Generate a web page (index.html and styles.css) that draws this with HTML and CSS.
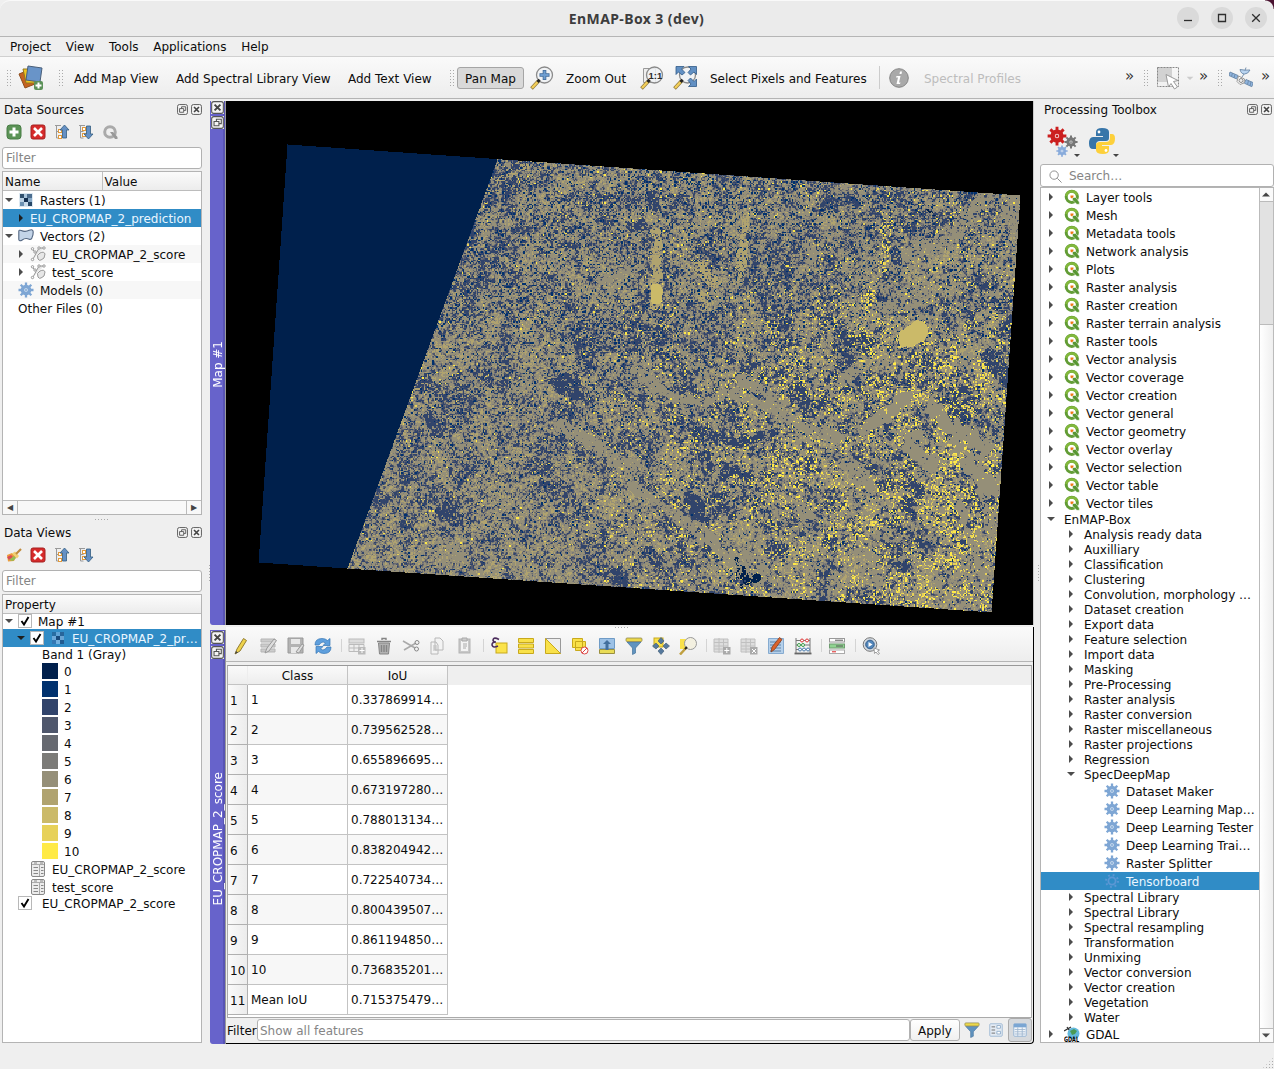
FILE: index.html
```html
<!DOCTYPE html>
<html lang="en">
<head>
<meta charset="utf-8">
<title>EnMAP-Box 3 (dev)</title>
<link rel="stylesheet" href="styles.css">
</head>
<body>
<svg class="defs" aria-hidden="true">
  <symbol id="right" viewBox="0 0 12 12"><path d="M4 2v8l4-4z" fill="#4c4c4c"/></symbol>
  <symbol id="down" viewBox="0 0 12 12"><path d="M2 4h8L6 8z" fill="#4c4c4c"/></symbol>
  <symbol id="float" viewBox="0 0 12 12"><rect x=".6" y=".6" width="10.8" height="10.8" rx="2" fill="#f4f4f4" stroke="#555"/><path d="M5 5V3h4.500v4H7.500M2.800 5h4.500v4H2.800z" fill="none" stroke="#555"/></symbol>
  <symbol id="close" viewBox="0 0 12 12"><rect x=".6" y=".6" width="10.8" height="10.8" rx="2" fill="#f4f4f4" stroke="#555"/><path d="M3.300 3.300l5.400 5.400M8.700 3.300L3.300 8.700" stroke="#444" stroke-width="1.800"/></symbol>
  <symbol id="plus" viewBox="0 0 16 16"><rect x="1" y="1" width="14" height="14" rx="3" fill="#5b9356" stroke="#487c45"/><path d="M8 3.500v9M3.500 8h9" stroke="#fff" stroke-width="3"/></symbol>
  <symbol id="remove" viewBox="0 0 16 16"><rect x="1" y="1" width="14" height="14" rx="2" fill="#d62b2b" stroke="#a52020"/><path d="M4 4l8 8M12 4l-8 8" stroke="#fff" stroke-width="2.600"/></symbol>
  <symbol id="collapse" viewBox="0 0 16 16"><path d="M1 1.500h6M2.500 2v12h3M2.500 7.500h3" fill="none" stroke="#999"/><rect x="4.500" y="5.500" width="3" height="3" fill="#fff" stroke="#e29a3c"/><rect x="4.500" y="11.500" width="3" height="3" fill="#fff" stroke="#e29a3c"/><path d="M10.500 1L15 6h-2.500v8h-4V6H6z" fill="#6590c4" stroke="#335d80" stroke-width=".8"/></symbol>
  <symbol id="expand" viewBox="0 0 16 16"><path d="M1 1.500h6M2.500 2v12h3M2.500 7.500h3" fill="none" stroke="#999"/><rect x="4.500" y="3.500" width="3" height="3" fill="#fff" stroke="#e29a3c"/><rect x="4.500" y="9.500" width="3" height="3" fill="#fff" stroke="#e29a3c"/><path d="M10.500 15L15 10h-2.500V2h-4v8H6z" fill="#6590c4" stroke="#335d80" stroke-width=".8"/></symbol>
  <symbol id="qgray" viewBox="0 0 16 16"><circle cx="8" cy="8" r="5.300" fill="none" stroke="#aaa" stroke-width="3"/><path d="M8 8l3 0 4.500 5v2h-2.500z" fill="#999"/></symbol>
  <symbol id="qgis" viewBox="0 0 16 16"><circle cx="7.800" cy="7.800" r="5.600" fill="none" stroke="#629c35" stroke-width="3"/><path d="M2.300 7A5.600 5.600 0 0 1 13 6" fill="none" stroke="#83b83d" stroke-width="2.600"/><path d="M8.500 8.500h3.300l3.500 4.500v2.300h-2.500L8.500 11z" fill="#589632" stroke="#fff" stroke-width=".5"/><path d="M6.500 6.500h3v1l-1.500 2-1.500-1z" fill="#ee7913"/></symbol>
  <symbol id="raster" viewBox="0 0 16 16"><path d="M1 1h14v14H1z" fill="#dce8f2"/><path d="M2 2h4v4H2z" fill="#31516f"/><path d="M6 2h3v4H6z" fill="#a9c5dc"/><path d="M9 2h5v4H9z" fill="#4b6d8f"/><path d="M2 6h4v4H2z" fill="#b9d0e4"/><path d="M6 6h4v4H6z" fill="#142f50"/><path d="M10 6h4v4h-4z" fill="#86a8c6"/><path d="M2 10h4v4H2z" fill="#6c91b2"/><path d="M6 10h4v4H6z" fill="#c6daea"/><path d="M10 10h4v4h-4z" fill="#274767"/></symbol>
  <symbol id="rasterdim" viewBox="0 0 16 16"><path d="M2 2h4v4H2z" fill="#286da2"/><path d="M6 2h4v4H6z" fill="#5fa3d6"/><path d="M10 2h4v4h-4z" fill="#28659a"/><path d="M2 6h4v4H2z" fill="#6daadb"/><path d="M6 6h4v4H6z" fill="#184a7c"/><path d="M10 6h4v4h-4z" fill="#6aa4d3"/><path d="M2 10h4v4H2z" fill="#3478b3"/><path d="M6 10h4v4H6z" fill="#72b0df"/><path d="M10 10h4v4h-4z" fill="#215b90"/></symbol>
  <symbol id="vector" viewBox="0 0 16 16"><path d="M.8 11.500V3.500q0-1.800 2.400-1 4 1.800 8-.2 4-1.500 4 1.700 0 3-1 5-.5 3-3 2.200-4-1.700-7 .8-3 1.800-3.400-.5z" fill="#c3d4e8" stroke="#516580" stroke-width="1.100"/></symbol>
  <symbol id="geom" viewBox="0 0 16 16"><path d="M3 13L9 2h5M2 3l3 3M8 13q-2-4 2-6 4-2 5 1 0 5-4 6-2 1-3-1z" fill="#e7e7e7" stroke="#999"/><g fill="#fff" stroke="#999"><circle cx="2.500" cy="2.800" r="1.200"/><circle cx="5" cy="6" r="1.200"/><circle cx="2.500" cy="13.500" r="1.200"/><circle cx="9" cy="2" r="1.200"/><circle cx="14" cy="2" r="1.200"/></g></symbol>
  <symbol id="gear" viewBox="0 0 16 16"><path d="M8 .5v15M.5 8h15M2.700 2.700l10.600 10.600M13.300 2.700L2.700 13.300" stroke="currentColor" stroke-width="2.300"/><circle cx="8" cy="8" r="5.300" fill="currentColor"/><circle cx="8" cy="8" r="1.800" fill="#fff" fill-opacity=".75"/><circle cx="8" cy="8" r="1" fill="currentColor"/></symbol>
  <symbol id="form" viewBox="0 0 16 16"><rect x="1.500" y=".5" width="13" height="15" rx="1.500" fill="#ececec" stroke="#888"/><path d="M2 3.500h12M9.500 4v11" stroke="#aaa"/><path d="M3.500 6.500h4.500M3.500 9.500h4.500M3.500 12.500h4.500M11 6.500h2.500M11 9.500h2.500M11 12.500h2.500M4 2h3M10 2h3" stroke="#888"/></symbol>
  <symbol id="broom" viewBox="0 0 16 16"><path d="M1 8l5-2 4 4-2 4-6 .5z" fill="#ed9b3c"/><path d="M1 10l4-2 2 2-4 3z" fill="#d84b54"/><path d="M3 13l5-4 2 2-3 3z" fill="#92bd54"/><path d="M6 6.500l5 5 2-2.500-4-4.500z" fill="#f1cf72"/><path d="M10 7l5-5" stroke="#c08a3c" stroke-width="2.200"/></symbol>
  <symbol id="tick" viewBox="0 0 14 14"><rect x=".5" y=".5" width="13" height="13" fill="#fff" stroke="#b8b8b8"/><path d="M3.500 7l2.500 3.500L10.500 3" fill="none" stroke="#000" stroke-width="1.900"/></symbol>
  <symbol id="lens" viewBox="0 0 24 24"><circle cx="14.500" cy="9" r="8" fill="#f0f2f4" fill-opacity=".85" stroke="#8a8a8a" stroke-width="1.300"/><path d="M8.500 15l-7 7.500" stroke="#8b753a" stroke-width="3.600"/><path d="M8 15.500l-6 6.500" stroke="#f3cf5a" stroke-width="2.400"/><path d="M9.700 13.700l-2.200 2.300" stroke="#222" stroke-width="2.800"/></symbol>
  <symbol id="funnel" viewBox="0 0 18 18"><path d="M2 5h14l-5.500 6v5l-3 1.500V11z" fill="#6093bf" stroke="#44739c" stroke-width=".7"/><rect x="1" y="1" width="16" height="3.500" rx="1" fill="#ecd84b" stroke="#8f8852" stroke-width=".8"/></symbol>
</svg>

<header class="titlebar">
  <span class="corner"></span>
  <h1>EnMAP-Box 3 (dev)</h1>
  <div class="winbtns">
    <svg viewBox="0 0 22 22"><circle cx="11" cy="11" r="11"/><path d="M7 13.500h8"/></svg>
    <svg viewBox="0 0 22 22"><circle cx="11" cy="11" r="11"/><path d="M7.500 7.500h7v7h-7z"/></svg>
    <svg viewBox="0 0 22 22"><circle cx="11" cy="11" r="11"/><path d="M7.200 7.200l7.600 7.600M14.800 7.200l-7.600 7.600"/></svg>
  </div>
</header>
<nav class="menubar"><span>Project</span><span>View</span><span>Tools</span><span>Applications</span><span>Help</span></nav>

<div class="toolbar">
  <i class="grip"></i>
  <svg class="i26" viewBox="0 0 26 26"><path d="M1 9l10-4 6 14-10 4z" fill="#c5621f" stroke="#8d4d1c"/><path d="M5 4h13v14H8z" fill="#f0c51e" stroke="#8f7623"/><path d="M10 1l14 2-2 14-14-2z" fill="#6994c8" stroke="#4a5f79"/><rect x="16" y="16" width="9" height="9" rx="2" fill="#5b9158"/><path d="M20.500 17.500v6M17.500 20.500h6" stroke="#fff" stroke-width="2"/></svg>
  <i class="grip"></i>
  <span>Add Map View</span><span>Add Spectral Library View</span><span>Add Text View</span>
  <i class="grip"></i>
  <span class="pressed">Pan Map</span>
  <svg class="i24" viewBox="0 0 24 24"><use href="#lens"/><path d="M14.500 4v10M9.500 9h10" stroke="#426c9b" stroke-width="3.600"/><path d="M14.500 4.800v8.400M10.300 9h8.400" stroke="#6e9dd0" stroke-width="2"/></svg>
  <span>Zoom Out</span>
  <svg class="i24" viewBox="0 0 24 24"><path d="M3.500 2.500h12v14h-12z" fill="#eee" stroke="#999"/><use href="#lens"/><text class="one" x="8.500" y="12.500">1:1</text></svg>
  <svg class="i24" viewBox="0 0 24 24"><use href="#lens"/><g fill="#6290c3" stroke="#315b88" stroke-width=".8"><path d="M3 .500h8L8.500 3 12 6.500 9 9 5.500 6 3 8.500z"/><path d="M23.500.500h-8L18 3l-3 3.500L17.500 9 21 6l2.500 2.500z"/><path d="M23.500 20.500h-8L18 18l-3-3.500 2.500-2.500 3.500 3.500 2.500-2.500z"/></g></svg>
  <span>Select Pixels and Features</span>
  <i class="sep"></i>
  <svg class="i20" viewBox="0 0 20 20"><circle cx="10" cy="10" r="9.300" fill="#a9a9a9" stroke="#858585"/><path d="M11 3.500h2l-.5 2.500h-2zM7.500 8h4l-1.500 6.500h1.500l-.5 1.500H7.500l1.500-6.500H7z" fill="#fff"/></svg>
  <span class="off">Spectral Profiles</span>
  <b class="more">»</b>
  <i class="grip"></i>
  <svg class="i24" viewBox="0 0 24 24"><path d="M1 1h15v15H1z" fill="#d2d2d2"/><path d="M1.500 1.500h21v19h-21z" fill="none" stroke="#888" stroke-dasharray="2 1"/><path d="M10 8.500l12 6-4.500 1 4 5.500-3 2-3.500-5.500-2.500 3.500z" fill="#fff" stroke="#999"/></svg>
  <svg class="i10" viewBox="0 0 12 12"><path d="M1 4h10L6 9z" fill="#ccc"/></svg>
  <b class="more">»</b>
  <i class="grip"></i>
  <svg class="i24" viewBox="0 0 24 24"><g stroke="#6a88a8" stroke-width=".9"><path d="M1 6l8 3.500-1.300 3.500L0 9.500z" fill="#8fb4de"/><path d="M17 13.500l7.300 3.200-1.500 4-7.500-3.500z" fill="#8fb4de"/><path d="M3.500 7l-1 3.500M6 8.300L5 12M19.500 14.500l-1 4M22 15.800l-1 4" fill="none"/><path d="M11 3.500q5 1 10 .5-2 4-5.500 4t-4.500-4.500zM16 4.500l1-3M15 8l-2 3" fill="#b9d4f0"/></g><path d="M9.500 10l6 3-.5 4-4 1.500-3-3z" fill="#fff" stroke="#999"/><circle cx="12" cy="14.500" r="2" fill="#eee" stroke="#888"/></svg>
  <b class="more">»</b>
</div>

<main>
  <aside class="dock left">
    <div class="dtitle"><span>Data Sources</span><svg><use href="#float"/></svg><svg><use href="#close"/></svg></div>
    <div class="dtools"><svg><use href="#plus"/></svg><svg><use href="#remove"/></svg><svg><use href="#collapse"/></svg><svg><use href="#expand"/></svg><svg><use href="#qgray"/></svg></div>
    <div class="field">Filter</div>
    <div class="tree sources">
      <div class="thead two"><span>Name</span><span>Value</span></div>
      <div class="rows">
        <div class="r"><svg class="a"><use href="#down"/></svg><svg><use href="#raster"/></svg>Rasters (1)</div>
        <div class="r l1 sel"><svg class="a"><use href="#right"/></svg>EU_CROPMAP_2_prediction</div>
        <div class="r"><svg class="a"><use href="#down"/></svg><svg><use href="#vector"/></svg>Vectors (2)</div>
        <div class="r l1 alt"><svg class="a"><use href="#right"/></svg><svg><use href="#geom"/></svg>EU_CROPMAP_2_score</div>
        <div class="r l1"><svg class="a"><use href="#right"/></svg><svg><use href="#geom"/></svg>test_score</div>
        <div class="r alt"><i class="a"></i><svg class="blue"><use href="#gear"/></svg>Models (0)</div>
        <div class="r"><i class="a"></i>Other Files (0)</div>
      </div>
      <div class="hscroll"><b>◀</b><i></i><b>▶</b></div>
    </div>
    <div class="hsplit"></div>
    <div class="dtitle"><span>Data Views</span><svg><use href="#float"/></svg><svg><use href="#close"/></svg></div>
    <div class="dtools"><svg><use href="#broom"/></svg><svg><use href="#remove"/></svg><svg><use href="#collapse"/></svg><svg><use href="#expand"/></svg></div>
    <div class="field">Filter</div>
    <div class="tree views">
      <div class="thead"><span>Property</span></div>
      <div class="rows">
        <div class="r s"><svg class="a"><use href="#down"/></svg><svg class="c"><use href="#tick"/></svg>Map #1</div>
        <div class="r l1 sel"><svg class="a"><use href="#down"/></svg><svg class="c"><use href="#tick"/></svg><svg><use href="#rasterdim"/></svg>EU_CROPMAP_2_pr…</div>
        <div class="r s l2"><i class="a"></i>Band 1 (Gray)</div>
        <div class="r l2"><i class="a"></i><i class="sw k0"></i>0</div>
        <div class="r l2"><i class="a"></i><i class="sw k1"></i>1</div>
        <div class="r l2"><i class="a"></i><i class="sw k2"></i>2</div>
        <div class="r l2"><i class="a"></i><i class="sw k3"></i>3</div>
        <div class="r l2"><i class="a"></i><i class="sw k4"></i>4</div>
        <div class="r l2"><i class="a"></i><i class="sw k5"></i>5</div>
        <div class="r l2"><i class="a"></i><i class="sw k6"></i>6</div>
        <div class="r l2"><i class="a"></i><i class="sw k7"></i>7</div>
        <div class="r l2"><i class="a"></i><i class="sw k8"></i>8</div>
        <div class="r l2"><i class="a"></i><i class="sw k9"></i>9</div>
        <div class="r l2"><i class="a"></i><i class="sw k10"></i>10</div>
        <div class="r l1"><i class="a"></i><svg><use href="#form"/></svg>EU_CROPMAP_2_score</div>
        <div class="r l1"><i class="a"></i><svg><use href="#form"/></svg>test_score</div>
        <div class="r s wide"><i class="a"></i><svg class="c"><use href="#tick"/></svg>EU_CROPMAP_2_score</div>
      </div>
    </div>
  </aside>
  <div class="vsplit"></div>

  <section class="center">
    <div class="mapdock">
      <div class="strip"><svg><use href="#close"/></svg><svg><use href="#float"/></svg><span>Map #1</span></div>
      <canvas id="map" width="807" height="524"></canvas>
    </div>
    <div class="hsplit mid"></div>
    <div class="tabdock">
      <div class="strip"><svg><use href="#close"/></svg><svg><use href="#float"/></svg><span>EU_CROPMAP_2_score</span></div>
      <div class="attr">
        <div class="atools">
          <svg viewBox="0 0 18 18"><path d="M2 17l2-5L10.500 1.500l3 2-6.500 10.500z" fill="#eed24b" stroke="#937d31"/><path d="M2 17l1-3 2 1.500z" fill="#444"/></svg>
          <svg viewBox="0 0 18 18"><path d="M1 2h14v3H1zM1 7h14v3H1zM1 12h14v3H1z" fill="#ccc" stroke="#b5b5b5"/><path d="M5 16l2-5 7-9 2.500 1.500-7.500 10.500z" fill="#ddd" stroke="#999"/></svg>
          <svg viewBox="0 0 18 18"><path d="M1 1h15v15H1z" fill="#b3b3b3" stroke="#999"/><path d="M4 2h9v5H4zM4 10h9v6H4z" fill="#e8e8e8"/><path d="M9 15l6-8 2 1-5 8z" fill="#ddd" stroke="#999"/></svg>
          <svg viewBox="0 0 18 18"><path d="M1 8q0-6.500 7-6.500 3.500 0 5.500 2l2.500-2v7H9l2.500-2.500Q8 3.500 5 8z" fill="#5e9fdd" stroke="#3476b5" stroke-width=".7"/><path d="M17 10q0 6.500-7 6.500-3.500 0-5.500-2l-2.500 2v-7h7l-2.500 2.500q3.500 2.500 6.500-2z" fill="#5e9fdd" stroke="#3476b5" stroke-width=".7"/></svg>
          <i></i>
          <svg viewBox="0 0 18 18"><rect x="1" y="2" width="15" height="4" fill="#ddd" stroke="#bbb"/><path d="M1 7.500h15v7H1zM6 7.500v7M11 7.500v7M1 11h15" fill="#eee" stroke="#bbb"/><path d="M10 10h7.500v7.500H10z" fill="#bbb"/><path d="M14 11v5M11.500 13.500h5" stroke="#fff"/></svg>
          <svg viewBox="0 0 18 18"><path d="M3.500 6h11l-1 11h-9z" fill="#b2b2b2" stroke="#858585"/><path d="M2 4.500h14M7 3V1.500h4V3M6.500 8v7M9 8v7M11.500 8v7" fill="none" stroke="#858585" stroke-width="1.400"/></svg>
          <svg viewBox="0 0 18 18"><path d="M1 4l12 7M2 13l12-7" stroke="#aaa" stroke-width="1.600"/><circle cx="15" cy="5.500" r="2" fill="none" stroke="#888"/><circle cx="14.500" cy="12" r="2" fill="none" stroke="#888"/></svg>
          <svg viewBox="0 0 18 18"><path d="M6 1h5l3 3v9H6zM2 5h5l2 3v9H2z" fill="#f3f3f3" stroke="#b8b8b8"/><path d="M4 9h4M4 11h4M4 13h4" stroke="#bbb"/></svg>
          <svg viewBox="0 0 18 18"><rect x="3" y="2" width="11" height="14" fill="#c8c8c8" stroke="#b3b3b3"/><path d="M5 4h7v10H5z" fill="#f3f3f3"/><path d="M6 1h5v3H6zM7 7h4M7 9h4M7 11h3" fill="#ccc" stroke="#aaa"/></svg>
          <i></i>
          <svg viewBox="0 0 18 18"><rect x="6" y="6" width="11" height="10" fill="#fbe34b" stroke="#c8a91c"/><path d="M9 2.500Q3.500-.500 3 3q0 2 3 2-4 0-4 3 1 3.500 6 1" fill="none" stroke="#4d2e5d" stroke-width="1.600"/></svg>
          <svg viewBox="0 0 18 18"><path d="M1.500 1.500h15v4h-15zM1.500 7h15v4h-15zM1.500 12.500h15v4h-15z" fill="#f9e149" stroke="#c8a91c"/></svg>
          <svg viewBox="0 0 18 18"><path d="M1.500 1.500h15v15z" fill="#eee" stroke="#999"/><path d="M1.500 1.500v15h15z" fill="#f9e149" stroke="#c8a91c"/></svg>
          <svg viewBox="0 0 18 18"><path d="M1.500 1.500h10v9h-10zM4.500 4.500h10v9h-10z" fill="#f9e149" stroke="#c8a91c"/><circle cx="13.500" cy="13.500" r="3.500" fill="#fff" stroke="#d44"/><path d="M11 16l5-5" stroke="#d44"/></svg>
          <svg viewBox="0 0 18 18"><path d="M1.500 1.500h15v10h-15z" fill="#9cc1e6" stroke="#6f9bc6"/><path d="M1.500 12.500h15v4h-15z" fill="#e9dc57" stroke="#9b903f"/><path d="M9 3l4 4h-2.500v6h-3V7H5z" fill="#426f9d"/></svg>
          <svg viewBox="0 0 18 18"><use href="#funnel"/></svg>
          <svg viewBox="0 0 18 18"><rect x="2" y="1" width="9" height="9" fill="#f9e149" stroke="#c8a91c"/><g fill="#55799d" stroke="#3c5771" stroke-width=".6"><path d="M9 .5l3 3.500L9 7 6 4zM9 17.500l3-3.500L9 11l-3 3zM.5 9l3.500-3L7 9l-3 3zM17.500 9l-3.500-3L11 9l3 3z"/></g></svg>
          <svg viewBox="0 0 18 18"><path d="M1 2h9v10H1z" fill="#f9e149"/><circle cx="11.500" cy="6.500" r="6" fill="#f3f0e0" stroke="#999"/><path d="M7 11l-6 6.500" stroke="#c0a040" stroke-width="2.500"/><path d="M8 10l-2 2" stroke="#222" stroke-width="2"/></svg>
          <i></i>
          <svg viewBox="0 0 18 18"><path d="M1 2h14v13H1zM6 1v15M10.500 2v13M1 5.500h14M1 9h14M1 12h14" fill="#ddd" stroke="#c0c0c0"/><path d="M10 10h7.500v7.500H10z" fill="#aaa"/><path d="M13.800 11v5M11.300 13.500h5" stroke="#fff"/></svg>
          <svg viewBox="0 0 18 18"><path d="M1 2h14v13H1zM6 1v15M10.500 2v13M1 5.500h14M1 9h14M1 12h14" fill="#ddd" stroke="#c0c0c0"/><path d="M10 10h7.500v7.500H10z" fill="#aaa"/><path d="M12 12l4 4M16 12l-4 4" stroke="#fff"/></svg>
          <svg viewBox="0 0 18 18"><path d="M1.500 1.500h15v15h-15z" fill="#b5d0ea" stroke="#86abd0"/><path d="M3 5h11M3 8h11M3 11h11M3 14h11" stroke="#5c81a8"/><path d="M4 15l1-5 7.500-9.500 2.500 2-7.500 10z" fill="#dc632b" stroke="#843e1e" stroke-width=".8"/></svg>
          <svg viewBox="0 0 18 18"><path d="M2 1v15M16 1v15M2 3.500h14M2 8h14M2 12.500h14" stroke="#777"/><path d="M.5 16.500h17" stroke="#666" stroke-width="1.800"/><g fill="#fff"><g stroke="#d33"><circle cx="8" cy="3.500" r="1.500"/><circle cx="13" cy="3.500" r="1.500"/></g><g stroke="#3a9c48"><circle cx="5" cy="8" r="1.500"/><circle cx="9" cy="8" r="1.500"/></g><g stroke="#477aad"><circle cx="6" cy="12.500" r="1.500"/><circle cx="10" cy="12.500" r="1.500"/><circle cx="14" cy="12.500" r="1.500"/></g></g></svg>
          <i></i>
          <svg viewBox="0 0 18 18"><rect x="1.500" y="1.500" width="15" height="3.500" fill="#fff" stroke="#999"/><rect x="1.500" y="7" width="15" height="4" fill="#8fd390" stroke="#6f9c70"/><rect x="1.500" y="13" width="15" height="3.500" fill="#fff" stroke="#aaa"/><path d="M7 3.200h8M8 9h7" stroke="#555"/><path d="M4 14.800h4" stroke="#d22"/></svg>
          <i></i>
          <svg viewBox="0 0 18 18"><circle cx="8" cy="7.500" r="6.800" fill="#d5dbe2" stroke="#777"/><circle cx="8" cy="7.500" r="4.300" fill="#5286bb" stroke="#345f8c"/><path d="M6.500 5l4 2.500-4 2.500z" fill="#fff"/><path d="M12 11l5.500 2-2 1 2 2.500-1.500 1-2-2.500-1.500 1.500z" fill="#fff" stroke="#888" stroke-width=".8"/></svg>
        </div>
        <div class="tablebox">
          <table>
            <thead><tr><th></th><th>Class</th><th>IoU</th></tr></thead>
            <tbody>
              <tr><th>1</th><td>1</td><td>0.337869914…</td></tr>
              <tr><th>2</th><td>2</td><td>0.739562528…</td></tr>
              <tr><th>3</th><td>3</td><td>0.655896695…</td></tr>
              <tr><th>4</th><td>4</td><td>0.673197280…</td></tr>
              <tr><th>5</th><td>5</td><td>0.788013134…</td></tr>
              <tr><th>6</th><td>6</td><td>0.838204942…</td></tr>
              <tr><th>7</th><td>7</td><td>0.722540734…</td></tr>
              <tr><th>8</th><td>8</td><td>0.800439507…</td></tr>
              <tr><th>9</th><td>9</td><td>0.861194850…</td></tr>
              <tr><th>10</th><td>10</td><td>0.736835201…</td></tr>
              <tr><th>11</th><td>Mean IoU</td><td>0.715375479…</td></tr>
            </tbody>
          </table>
        </div>
        <div class="filterrow">
          <label>Filter</label><div class="finput">Show all features</div><div class="apply">Apply</div>
          <div class="fb"><svg viewBox="0 0 18 18"><use href="#funnel"/></svg></div>
          <div class="fb"><svg viewBox="0 0 18 18"><rect x="2" y="2" width="14" height="14" rx="1" fill="#e4ebf3" stroke="#9bb6d2"/><path d="M4 5.500h4M4 9h4M4 12.500h4" stroke="#666"/><path d="M10 4h4v3h-4zM10 10.500h4v3h-4z" fill="#fff" stroke="#8eacca"/></svg></div>
          <div class="fb on"><svg viewBox="0 0 18 18"><rect x="2" y="2" width="14" height="14" rx="1" fill="#f3f7fb" stroke="#8fb0d2"/><path d="M2 2h14v4H2z" fill="#7ba6d3"/><path d="M6.500 6v10M11.500 6v10M3 8.500h12M3 11h12M3 13.500h12" stroke="#9fb6cf"/></svg></div>
        </div>
      </div>
    </div>
  </section>

  <div class="vsplit right"></div>
  <aside class="dock toolbox">
    <div class="dtitle"><span>Processing Toolbox</span><svg><use href="#float"/></svg><svg><use href="#close"/></svg></div>
    <div class="ptools">
      <svg viewBox="0 0 34 34"><svg x="0" y="0" width="20" height="20" color="#cb1f1f"><use href="#gear"/></svg><svg x="17" y="9" width="14" height="14" color="#777"><use href="#gear"/></svg><svg x="9" y="19" width="12" height="12" color="#88abdb"><use href="#gear"/></svg><path d="M27 28h6l-3 3z" fill="#444"/></svg>
      <svg viewBox="0 0 34 34"><path d="M14 2q-6 0-6 4v4h7v1H5q-4 0-4 6.500Q1 23 5 23h3v-4q0-4 4-4h6q3 0 3-3V6q0-4-7-4z" fill="#3775a9"/><path d="M15 28q6 0 6-4v-4h-7v-1h9q4 0 4-6.500Q27 8 24 8h-2v4q0 4-4 4h-6q-4 0-4 3v5q0 4 7 4z" fill="#fdd03b"/><circle cx="11" cy="6" r="1.400" fill="#fff"/><circle cx="18" cy="24.500" r="1.400" fill="#fff"/><path d="M25 28h6l-3 3z" fill="#444"/></svg>
    </div>
    <div class="field search"><svg viewBox="0 0 14 14"><circle cx="5.500" cy="5.500" r="4.500" fill="none" stroke="#888"/><path d="M9 9l4.500 4.500" stroke="#888"/></svg>Search…</div>
    <div class="tree ptree">
      <div class="rows">
        <div class="r"><svg class="a"><use href="#right"/></svg><svg><use href="#qgis"/></svg>Layer tools</div>
        <div class="r"><svg class="a"><use href="#right"/></svg><svg><use href="#qgis"/></svg>Mesh</div>
        <div class="r"><svg class="a"><use href="#right"/></svg><svg><use href="#qgis"/></svg>Metadata tools</div>
        <div class="r"><svg class="a"><use href="#right"/></svg><svg><use href="#qgis"/></svg>Network analysis</div>
        <div class="r"><svg class="a"><use href="#right"/></svg><svg><use href="#qgis"/></svg>Plots</div>
        <div class="r"><svg class="a"><use href="#right"/></svg><svg><use href="#qgis"/></svg>Raster analysis</div>
        <div class="r"><svg class="a"><use href="#right"/></svg><svg><use href="#qgis"/></svg>Raster creation</div>
        <div class="r"><svg class="a"><use href="#right"/></svg><svg><use href="#qgis"/></svg>Raster terrain analysis</div>
        <div class="r"><svg class="a"><use href="#right"/></svg><svg><use href="#qgis"/></svg>Raster tools</div>
        <div class="r"><svg class="a"><use href="#right"/></svg><svg><use href="#qgis"/></svg>Vector analysis</div>
        <div class="r"><svg class="a"><use href="#right"/></svg><svg><use href="#qgis"/></svg>Vector coverage</div>
        <div class="r"><svg class="a"><use href="#right"/></svg><svg><use href="#qgis"/></svg>Vector creation</div>
        <div class="r"><svg class="a"><use href="#right"/></svg><svg><use href="#qgis"/></svg>Vector general</div>
        <div class="r"><svg class="a"><use href="#right"/></svg><svg><use href="#qgis"/></svg>Vector geometry</div>
        <div class="r"><svg class="a"><use href="#right"/></svg><svg><use href="#qgis"/></svg>Vector overlay</div>
        <div class="r"><svg class="a"><use href="#right"/></svg><svg><use href="#qgis"/></svg>Vector selection</div>
        <div class="r"><svg class="a"><use href="#right"/></svg><svg><use href="#qgis"/></svg>Vector table</div>
        <div class="r"><svg class="a"><use href="#right"/></svg><svg><use href="#qgis"/></svg>Vector tiles</div>
        <div class="r s"><svg class="a"><use href="#down"/></svg>EnMAP-Box</div>
        <div class="r s l1"><svg class="a"><use href="#right"/></svg>Analysis ready data</div>
        <div class="r s l1"><svg class="a"><use href="#right"/></svg>Auxilliary</div>
        <div class="r s l1"><svg class="a"><use href="#right"/></svg>Classification</div>
        <div class="r s l1"><svg class="a"><use href="#right"/></svg>Clustering</div>
        <div class="r s l1"><svg class="a"><use href="#right"/></svg>Convolution, morphology …</div>
        <div class="r s l1"><svg class="a"><use href="#right"/></svg>Dataset creation</div>
        <div class="r s l1"><svg class="a"><use href="#right"/></svg>Export data</div>
        <div class="r s l1"><svg class="a"><use href="#right"/></svg>Feature selection</div>
        <div class="r s l1"><svg class="a"><use href="#right"/></svg>Import data</div>
        <div class="r s l1"><svg class="a"><use href="#right"/></svg>Masking</div>
        <div class="r s l1"><svg class="a"><use href="#right"/></svg>Pre-Processing</div>
        <div class="r s l1"><svg class="a"><use href="#right"/></svg>Raster analysis</div>
        <div class="r s l1"><svg class="a"><use href="#right"/></svg>Raster conversion</div>
        <div class="r s l1"><svg class="a"><use href="#right"/></svg>Raster miscellaneous</div>
        <div class="r s l1"><svg class="a"><use href="#right"/></svg>Raster projections</div>
        <div class="r s l1"><svg class="a"><use href="#right"/></svg>Regression</div>
        <div class="r s l1"><svg class="a"><use href="#down"/></svg>SpecDeepMap</div>
        <div class="r l2"><i class="a"></i><svg class="blue"><use href="#gear"/></svg>Dataset Maker</div>
        <div class="r l2"><i class="a"></i><svg class="blue"><use href="#gear"/></svg>Deep Learning Map…</div>
        <div class="r l2"><i class="a"></i><svg class="blue"><use href="#gear"/></svg>Deep Learning Tester</div>
        <div class="r l2"><i class="a"></i><svg class="blue"><use href="#gear"/></svg>Deep Learning Trai…</div>
        <div class="r l2"><i class="a"></i><svg class="blue"><use href="#gear"/></svg>Raster Splitter</div>
        <div class="r l2 sel"><i class="a"></i><svg viewBox="0 0 16 16"><circle cx="8" cy="8" r="3.600" fill="none" stroke="#5b97d4" stroke-width="1.800"/><circle cx="8" cy="8" r="6" fill="none" stroke="#5b97d4" stroke-width="2" stroke-dasharray="1.800 2.910"/></svg>Tensorboard</div>
        <div class="r s l1"><svg class="a"><use href="#right"/></svg>Spectral Library</div>
        <div class="r s l1"><svg class="a"><use href="#right"/></svg>Spectral Library</div>
        <div class="r s l1"><svg class="a"><use href="#right"/></svg>Spectral resampling</div>
        <div class="r s l1"><svg class="a"><use href="#right"/></svg>Transformation</div>
        <div class="r s l1"><svg class="a"><use href="#right"/></svg>Unmixing</div>
        <div class="r s l1"><svg class="a"><use href="#right"/></svg>Vector conversion</div>
        <div class="r s l1"><svg class="a"><use href="#right"/></svg>Vector creation</div>
        <div class="r s l1"><svg class="a"><use href="#right"/></svg>Vegetation</div>
        <div class="r s l1"><svg class="a"><use href="#right"/></svg>Water</div>
        <div class="r"><svg class="a"><use href="#right"/></svg><svg viewBox="0 0 16 16"><circle cx="9.500" cy="7.500" r="6" fill="#62b8dc"/><path d="M6 5l4-2 3 2-2 3-3 1z" fill="#4a9a55"/><path d="M0 5l7-4M3 1l2 3" stroke="#333" stroke-width="1.300"/><text x="0" y="15.500" font-size="7.500" font-weight="bold" textLength="15" lengthAdjust="spacingAndGlyphs">GDAL</text></svg>GDAL</div>
      </div>
      <div class="vscroll"><svg viewBox="0 0 12 12"><path d="M2 8h8L6 4z" fill="#444"/></svg><i class="groove"></i><i class="handle"></i><svg><use href="#down"/></svg></div>
    </div>
  </aside>
</main>
<footer><i class="sizegrip"></i></footer>
<script src="map.js"></script>
</body>
</html>
```
FILE: styles.css
```css
* { box-sizing: border-box; }
body { margin: 0; width: 1274px; height: 1069px; overflow: hidden; display: flex; flex-direction: column; background: #efefef; color: #0c0c0c; font: 12px/15px "DejaVu Sans", sans-serif; }
svg { display: block; flex: none; }
.defs { position: absolute; width: 0; height: 0; }

.titlebar { position: relative; height: 37px; flex: none; display: grid; place-items: center; background: #ebebeb; border-top: 1px solid #f9f9f9; border-bottom: 1px solid #b5b5b5; border-radius: 10px 0 0 0; }
.titlebar h1 { margin: 0 1px 0 0; font: bold 14px/20px "Noto Sans", sans-serif; color: #3d3d3d; letter-spacing: .4px; }
.corner { position: absolute; right: 0; top: -1px; width: 9px; height: 9px; background: radial-gradient(circle at 0 100%, #ebebeb 8px, #4a1230 9px); }
.winbtns { position: absolute; right: 7px; top: 6px; display: flex; gap: 12px; }
.winbtns svg { width: 22px; height: 22px; fill: #dadada; }
.winbtns path { fill: none; stroke: #2e2e2e; stroke-width: 1.3; }

.menubar { height: 20px; flex: none; display: flex; gap: 14.7px; padding: 3px 10px 0; border-bottom: 1px solid #d0d0d0; }
.toolbar { height: 42px; flex: none; display: grid; grid-template-columns: 13px 39px 16px 102px 172px 101px 8px 73px 36px 74px 33px 37px 169px 10px 35px 202px 17px 13px 30px 14px 17px 12px 33px 12px; align-items: center; padding-left: 6px; background: linear-gradient(#fafafa, #ededed); border-bottom: 1px solid #b4b4b4; white-space: nowrap; }
.toolbar > span { padding-top: 4px; }
.grip { width: 5px; height: 17px; background: radial-gradient(circle, #aaa .7px, transparent 1px) 0 0 / 3px 3px; }
.sep { width: 1px; height: 23px; background: #ccc; }
.i26 { width: 26px; height: 26px; margin-left: -1px; }
.i24 { width: 24px; height: 24px; }
.i20 { width: 20px; height: 20px; }
.i10 { width: 8px; height: 8px; }
.one { font: bold 9.5px "Liberation Sans", sans-serif; fill: #2a2a2a; }
.toolbar > .pressed { padding-top: 2px; width: 67px; height: 22px; line-height: 19px; text-align: center; border: 1px solid #a5a5a5; border-radius: 3px; background: #d9d9d9; }
.off { color: #bdbdbd; }
.more { font: 15px/16px "DejaVu Sans", sans-serif; color: #333; margin: -4px 0 0 -1px; }

main { height: 945px; flex: none; display: flex; }
.dock { display: flex; flex-direction: column; }
.left { width: 202px; padding-left: 2px; }
.vsplit { width: 8px; background: radial-gradient(circle, #aaa .6px, transparent 1px) 0 0 / 3px 3px; clip-path: inset(466px 0 463px 5px); }
.vsplit.right { width: 6px; clip-path: inset(466px 0 463px 3px); }
.dtitle { height: 21px; flex: none; display: flex; align-items: center; gap: 3px; padding-left: 2px; }
.dtitle span { padding-top: 2px; }
.dtitle svg { width: 11px; height: 11px; }
.dtitle svg:first-of-type { margin-left: auto; }
.dtools { height: 27px; flex: none; display: flex; gap: 8px; padding: 4px 4px 0; }
.dtools svg { width: 16px; height: 16px; }
.field { height: 22px; flex: none; display: flex; align-items: center; padding: 0 3px; background: #fff; border: 1px solid #b1b1b1; border-radius: 3px; color: #858585; }
.tree { border: 1px solid #b4b4b4; background: #fff; display: flex; flex-direction: column; overflow: hidden; }
.sources { margin-top: 2px; height: 344px; }
.views { margin-top: 2px; height: 449px; }
.thead { height: 19px; flex: none; display: flex; background: linear-gradient(#fbfbfb, #ececec); border-bottom: 1px solid #bcbcbc; line-height: 20px; }
.thead span { padding-left: 2px; }
.two span { flex: 1; }
.two span + span { border-left: 1px solid #c0c0c0; }
.rows { flex: 1; min-width: 0; }
.r { height: 18px; padding-top: 2px; display: flex; align-items: center; white-space: nowrap; overflow: hidden; }
.r.s { height: 15px; padding-top: 1px; }
.r svg, .sw { width: 16px; height: 16px; margin: 0 6px 2px 0; }
.r .a { flex: none; width: 12px; height: 12px; margin-right: 3px; }
.r .c { width: 14px; height: 14px; }
.l1 { padding-left: 12px; }
.l2 { padding-left: 24px; }
.wide .c { margin-right: 10px; }
.alt { background: #f7f7f7; }
.sel { background: #308cc6; color: #eaf6ff; }
.sel .a { filter: brightness(.4); }
.blue { color: #7ea6d4; }
.k0 { background: #00204c; } .k1 { background: #00316e; } .k2 { background: #31446b; } .k3 { background: #4f576c; }
.k4 { background: #666970; } .k5 { background: #7c7b78; } .k6 { background: #958f78; } .k7 { background: #b0a36f; }
.k8 { background: #cbba69; } .k9 { background: #e7d159; } .k10 { background: #ffea46; }
.hscroll { height: 14px; flex: none; display: grid; grid-template-columns: 14px 1fr 14px; border-top: 1px solid #bbb; font-size: 8px; line-height: 13px; text-align: center; color: #444; background: #f8f8f8; }
.hscroll i { border: solid #bbb; border-width: 0 1px; }
.hscroll b { font-weight: normal; }
.hsplit { height: 7px; flex: none; background: radial-gradient(circle, #aaa .6px, transparent 1px) 92px 3px / 3px 3px repeat-x; clip-path: inset(0 92px); }

.center { width: 824px; display: flex; flex-direction: column; }
.mapdock { display: flex; height: 524px; margin-top: 2px; border-right: 1px solid #ccc; }
.strip { width: 15px; flex: none; margin-right: 1px; display: flex; flex-direction: column; align-items: center; gap: 2px; background: #6763cb; border-right: 2px solid #5854b4; border-radius: 0 0 0 3px; box-shadow: 1px 0 #9a9a9a; }
.strip svg { width: 13px; height: 13px; background: #f3f3f3; margin-left: 2px; }
.strip span { writing-mode: vertical-rl; transform: rotate(180deg); color: #fff; white-space: nowrap; margin: auto -4px auto 0; padding-top: 28px; }
.tabdock .strip { padding-top: 1px; }
#map { display: block; width: 807px; height: 524px; background: #000; }
.hsplit.mid { height: 5px; background-position: 404px 1px; clip-path: inset(0 404px); }
.tabdock { display: flex; height: 414px; }
.attr { width: 808px; display: flex; flex-direction: column; border: solid #000; border-width: 0 1px 1px 0; border-radius: 0 0 4px 0; margin-top: -3px; }
.atools { height: 35px; flex: none; display: flex; align-items: center; gap: 9px; padding: 3px 0 0 7px; background: linear-gradient(#fafafa, #ededed); border-bottom: 1px solid #b5b5b5; }
.atools svg { width: 18px; height: 18px; }
.atools i { width: 1px; height: 13px; background: #d4d4d4; margin-right: -3px; }
.tablebox { height: 353px; flex: none; margin: 3px 1px 0; border: 1px solid #aaa; border-top-color: #999; background: linear-gradient(#efefef 19px, #fff 19px); }
table { border-collapse: separate; border-spacing: 0; table-layout: fixed; width: 220px; }
th, td { padding: 0; height: 30px; font-weight: normal; text-align: left; border: solid #c3c3c3; border-width: 0 1px 1px 0; }
thead th { height: 19px; padding-top: 2px; text-align: center; background: linear-gradient(#fafafa, #ededed); width: 100px; }
thead th:first-child { width: 20px; border-right-color: #ededed; }
tbody th { background: linear-gradient(90deg, #fafafa, #ececec); padding: 3px 0 0 2px; border-color: #b0b0b0; }
td { padding: 2px 0 0 3px; }
tr:nth-child(even) td { background: #f7f7f7; }
.filterrow { flex: 1; display: flex; align-items: center; padding-left: 1px; padding-bottom: 1px; }
.filterrow label { width: 30px; padding-top: 2px; }
.finput { width: 653px; height: 22px; line-height: 22px; padding-left: 2px; background: #fff; border: 1px solid #b1b1b1; border-radius: 3px; color: #858585; }
.apply { width: 50px; height: 22px; line-height: 22px; text-align: center; border: 1px solid #b1b1b1; border-radius: 3px; background: linear-gradient(#fff, #f0f0f0); }
.fb { width: 24px; height: 24px; display: grid; place-items: center; }
.fb svg { width: 16px; height: 16px; }
.on { background: #d6d9dd; border: 1px solid #aaa; border-radius: 3px; }

.toolbox { width: 234px; }
.toolbox .dtitle { padding: 0 2px 0 4px; }
.ptools { height: 44px; flex: none; display: flex; gap: 7px; padding: 6px 0 0 7px; }
.ptools > svg { width: 34px; height: 34px; }
.search { padding: 1px 0 0 8px; gap: 7px; height: 23px; }
.search svg { width: 13px; height: 13px; }
.ptree { height: 856px; flex-direction: row; border-right: 0; }
.ptree .rows { width: 218px; overflow: hidden; }
.ptree .a { margin-right: 7px; margin-left: 4px; }
.ptree .l1 { padding-left: 20px; }
.ptree .l2 { padding-left: 40px; }
.vscroll { width: 15px; display: flex; flex-direction: column; border-left: 1px solid #bbb; border-right: 1px solid #bbb; background: #fafafa; }
.vscroll svg { width: 12px; height: 13px; }
.groove { height: 124px; background: #e2e2e2; border: solid #bbb; border-width: 1px 0; }
.handle { flex: 1; background: linear-gradient(90deg, #fff, #efefef); border-bottom: 1px solid #bbb; }
footer { flex: 1; display: flex; justify-content: flex-end; align-items: flex-end; }
.sizegrip { width: 12px; height: 12px; background: radial-gradient(circle, #aaa .6px, transparent 1px) 0 0 / 3px 3px; clip-path: polygon(100% 0, 100% 100%, 0 100%); }
```
FILE: map.js
```js
// Land-cover classes drawn with the palette of the legend, in canvas pixels.
const canvas = document.getElementById('map');
const W = canvas.width, H = canvas.height;
const ctx = canvas.getContext('2d');
const palette = ['00204c', '00316e', '31446b', '4f576c', '666970', '7c7b78', '958f78', 'b0a36f', 'cbba69', 'e7d159', 'ffea46']
  .map(h => [0, 2, 4].map(i => parseInt(h.substr(i, 2), 16)));

function hash(x, y, s) {
  let h = Math.imul(x, 374761393) + Math.imul(y, 668265263) + Math.imul(s, 1274126177);
  h = Math.imul(h ^ (h >>> 13), 1274126177);
  h = Math.imul(h ^ (h >>> 15), 2246822519);
  return ((h ^ (h >>> 16)) >>> 0) / 4294967296;
}
function noise(x, y, s) {
  const i = Math.floor(x), j = Math.floor(y);
  let u = x - i, v = y - j;
  u = u * u * (3 - 2 * u); v = v * v * (3 - 2 * v);
  return (hash(i, j, s) * (1 - u) + hash(i + 1, j, s) * u) * (1 - v) +
         (hash(i, j + 1, s) * (1 - u) + hash(i + 1, j + 1, s) * u) * v;
}
// Each stroke: class, half width, density, points.
const strokes = [
  [7, 5, .75, 430, 130, 430, 165, 429, 205], [8, 6, 1, 430, 188, 430, 197],
  [8, 10, 1, 682, 236, 693, 230], [7, 4, .7, 518, 115, 514, 175],
  [7, 8, .6, 475, 168, 484, 178], [7, 6, .5, 476, 195, 478, 203],
  [7, 3, .5, 270, 80, 300, 65], [6, 5, .7, 375, 180, 410, 167],
  [6, 6, .9, 336, 324, 365, 342], [6, 7, .7, 365, 342, 405, 365],
  [6, 5, .85, 410, 270, 435, 290, 475, 302, 508, 289, 540, 306, 565, 320, 615, 338],
  [6, 5, .85, 515, 279, 553, 300], [6, 5, .8, 405, 385, 445, 410, 490, 448, 530, 480],
  [6, 5, .9, 475, 422, 490, 445], [6, 7, .95, 635, 328, 668, 310, 678, 295],
  [6, 8, .97, 705, 305, 725, 325, 760, 345], [6, 7, .97, 730, 320, 732, 345],
  [6, 8, .97, 685, 335, 690, 352, 705, 362], [6, 10, .95, 742, 360, 762, 390],
  [6, 4, .9, 733, 395, 740, 430, 755, 470], [6, 8, .85, 625, 365, 640, 380],
  [6, 6, .8, 605, 290, 630, 268], [6, 7, .8, 575, 405, 580, 415],
  [6, 10, .6, 635, 450, 650, 480], [6, 8, .8, 760, 410, 768, 430],
  [6, 7, .75, 580, 145, 588, 155], [6, 9, .7, 685, 150, 720, 140, 760, 95],
  [6, 8, .65, 660, 205, 700, 190], [6, 9, .75, 765, 60, 785, 80, 790, 130],
  [6, 12, .7, 520, 460, 535, 475], [6, 10, .6, 215, 455, 225, 450],
  [2, 9, .7, 332, 280, 348, 290], [2, 7, .7, 348, 278, 350, 295], [2, 9, .7, 220, 408, 226, 418],
  [2, 7, .85, 466, 400, 476, 416], [2, 7, .7, 422, 452, 430, 458],
  [2, 6, .8, 425, 95, 427, 105], [2, 6, .7, 405, 125, 415, 122],
  [2, 5, .8, 203, 312, 210, 332], [2, 7, .65, 570, 290, 580, 310],
  [2, 5, .65, 475, 330, 510, 342, 550, 330], [2, 8, .75, 500, 370, 510, 370],
  [2, 8, .65, 545, 445, 555, 450], [2, 8, .7, 765, 255, 785, 280],
  [2, 6, .7, 685, 380, 692, 390], [2, 4, .7, 668, 150, 670, 160],
  [2, 5, .6, 255, 272, 262, 280], [2, 6, .7, 390, 470, 395, 478],
  [0, 4, .9, 517, 466, 521, 480, 530, 475], [0, 2, .5, 510, 458, 515, 486],
  [1, 5, .3, 453, 70, 462, 80], [0, 2, .5, 700, 108, 707, 112]
];
function near(x, y, s) {
  let best = 1e9;
  for (let i = 3; i + 3 < s.length; i += 2) {
    const ax = s[i], ay = s[i + 1], dx = s[i + 2] - ax, dy = s[i + 3] - ay;
    const t = Math.max(0, Math.min(1, ((x - ax) * dx + (y - ay) * dy) / (dx * dx + dy * dy)));
    best = Math.min(best, Math.hypot(x - ax - t * dx, y - ay - t * dy));
  }
  return best;
}
const goldRidge = [0, 0, 0, 662, 65, 660, 150, 632, 225];
const img = ctx.createImageData(W, H);
for (let y = 0; y < H; y++) {
  for (let x = 0; x < W; x++) {
    const top = 43 + (x - 61) * 51 / 734, bottom = 461 + (x - 32) * 50 / 734;
    const left = 61 - (y - 43) * 29 / 419, right = 794 - (y - 94) * 29 / 418;
    const edge = 271 - (y - 58) * 150 / 409;
    const o = (y * W + x) * 4;
    let c = -1;
    if (y >= top && y < bottom && x >= left && x < right) {
      if (x < edge) c = 0;
      else {
        const bx = Math.floor(x / 1.4), by = Math.floor(y / 1.4);
        const east = Math.max(0, Math.min(1, (x - 330) / 400));
        const south = y / H;
        const coarse = noise(x / 20, y / 20, 1) * .5 + noise(x / 8, y / 8, 2) * .5;
        const mid = noise(x / 2.8, y / 2.8, 3);
        const r = hash(bx, by, 4), q = hash(bx, by, 5);
        // Less per-pixel grain in the large fields of the south-east.
        const grain = .42 - .2 * east * south;
        const v = coarse * .5 + mid * .42 + r * grain + (.42 - grain) * .5 + east * .02 + south * .04;
        c = v < .56 ? 2 : v < .605 ? 3 : v < .65 ? 4 : v < .7 ? 5 : v < .98 ? 6 : 7;
        if (q < .09 * (1.15 - south)) c = 1;
        else if (q > .96 - .03 * (1 - east)) c = 7;
        const ridge = Math.max(0, 1 - near(x, y, goldRidge) / 9);
        const se = east * Math.max(0, Math.min(1, (y - 170) / 120));
        const north = east * Math.max(0, 1 - y / 150);
        const gold = .008 + east * .018 + .15 * se + .05 * north + .2 * ridge;
        const lump = Math.max(0, noise(x / 14, y / 14, 8) * 2.2 - .4);
        if (hash(bx, by, 6) < gold * (.15 + lump)) c = hash(bx, by, 7) < .6 ? 10 : 9;
        else if (se > .3 && mid + coarse * .5 < .5 && c < 6) c = 2;
        for (const s of strokes) {
          const d = near(x, y, s);
          const rough = s[0] === 8 ? .8 + noise(x / 5, y / 5, 9) * .4 : .3 + noise(x / 5, y / 5, 9) * 1.3;
          if (d < s[1] * rough && hash(bx, by, 10) < s[2]) c = s[0];
        }
      }
    }
    const p = c < 0 ? [0, 0, 0] : palette[c];
    img.data[o] = p[0]; img.data[o + 1] = p[1]; img.data[o + 2] = p[2]; img.data[o + 3] = 255;
  }
}
ctx.putImageData(img, 0, 0);
```
